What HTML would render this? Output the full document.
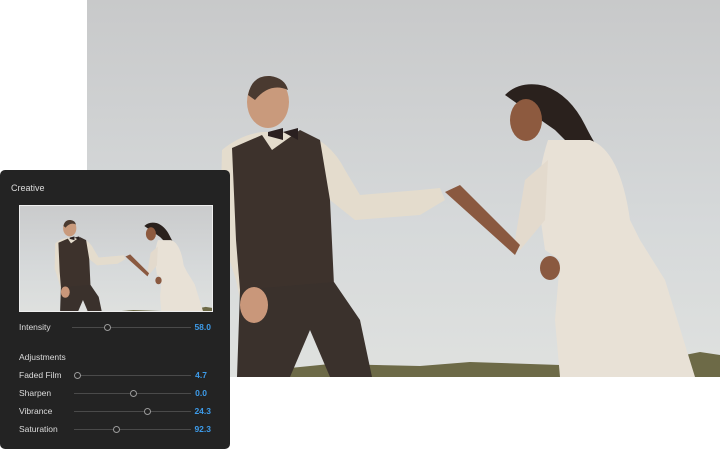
<!DOCTYPE html>
<html><head><meta charset="utf-8"><style>
*{margin:0;padding:0;box-sizing:border-box}
body{width:720px;height:450px;background:#fff;position:relative;overflow:hidden;font-family:"Liberation Sans",sans-serif}
#photo{position:absolute;left:0;top:0}
.panel{position:absolute;left:0;top:170px;width:230px;height:279px;background:#232323;border-radius:5px}
.t{position:absolute;font-size:8.5px;color:#dcdcdc}
.v{position:absolute;right:509px;font-size:8.5px;color:#3d9be9;font-weight:bold}
.tr{position:absolute;height:1px;background:#4a4a4a}
.k{position:absolute;width:7px;height:7px;border:1px solid #9a9a9a;border-radius:50%;background:#232323}
.thumb{position:absolute;left:19px;top:205px;width:194px;height:107px;border:1px solid #eee;overflow:hidden;background:#dcdfe0}
</style></head><body>
<svg id="photo" width="720" height="450" viewBox="0 0 720 450">
<defs>
<linearGradient id="sky" x1="0" y1="0" x2="0" y2="1"><stop offset="0" stop-color="#c8c9ca"/><stop offset="0.6" stop-color="#d6d9da"/><stop offset="1" stop-color="#dfe1df"/></linearGradient>
<g id="scene">
<rect x="87" y="0" width="633" height="377" fill="url(#sky)"/>
<path d="M285 377 L290 368 L330 364 L420 366 L470 362 L560 365 L650 362 L700 352 L720 355 L720 377Z" fill="#6d6a47"/>
<path d="M222 150 Q240 135 262 132 L300 132 Q330 140 345 170 L360 195 L420 190 L440 188 L445 200 L420 215 L355 220 L330 200 L332 290 L240 300 L236 280 L220 230Z" fill="#e4dccd"/>
<path d="M232 148 L262 135 L272 150 L300 130 L320 140 L330 200 L334 285 L300 295 L240 290 L236 240Z" fill="#3d322c"/>
<path d="M240 290 L334 282 L360 320 L372 377 L330 377 L310 330 L290 377 L237 377Z" fill="#3a312c"/>
<ellipse cx="268" cy="102" rx="21" ry="26" fill="#c99a7c"/>
<path d="M248 95 Q252 75 270 76 Q285 78 288 90 Q270 82 255 100Z" fill="#4a3a30"/>
<path d="M268 132 L283 128 L283 140 L268 136Z M298 128 L283 132 L298 140Z" fill="#2a2020"/>
<ellipse cx="254" cy="305" rx="14" ry="18" fill="#c9977a"/>
<path d="M505 95 Q520 80 545 86 Q570 95 585 125 Q595 145 600 150 L575 150 L555 130 Z" fill="#2a211d"/>
<ellipse cx="526" cy="120" rx="16" ry="21" fill="#8d5a3f"/>
<path d="M548 140 L590 140 Q620 150 630 220 L640 240 L665 280 L695 377 L560 377 L555 320 L560 260 L545 250 L540 215 Q535 180 548 140Z" fill="#e8e1d6"/>
<path d="M548 160 L525 180 L515 240 L520 250 L545 220Z" fill="#e3dacd"/>
<path d="M445 192 L460 185 L520 245 L515 255Z" fill="#8a5940"/>
<ellipse cx="550" cy="268" rx="10" ry="12" fill="#8a5940"/>
</g>
</defs>
<use href="#scene"/>
</svg>
<div class="panel"></div>
<div class="t" style="left:11px;top:183px;font-size:9px">Creative</div>
<div class="thumb"><svg width="192" height="105" viewBox="110 30 610 335" preserveAspectRatio="xMidYMax slice"><use href="#scene"/></svg></div>

<div class="t" style="left:19px;top:322px">Intensity</div>
<div class="tr" style="left:72px;top:327px;width:119px"></div><div class="k" style="left:104px;top:324px"></div>
<div class="v" style="top:322px">58.0</div>

<div class="t" style="left:19px;top:352px">Adjustments</div>

<div class="t" style="left:19px;top:370px">Faded Film</div>
<div class="tr" style="left:74px;top:375px;width:117px"></div><div class="k" style="left:74px;top:372px"></div>
<div class="v" style="top:370px;right:513px">4.7</div>

<div class="t" style="left:19px;top:388px">Sharpen</div>
<div class="tr" style="left:74px;top:393px;width:117px"></div><div class="k" style="left:130px;top:390px"></div>
<div class="v" style="top:388px;right:513px">0.0</div>

<div class="t" style="left:19px;top:406px">Vibrance</div>
<div class="tr" style="left:74px;top:411px;width:117px"></div><div class="k" style="left:144px;top:408px"></div>
<div class="v" style="top:406px">24.3</div>

<div class="t" style="left:19px;top:424px">Saturation</div>
<div class="tr" style="left:74px;top:429px;width:117px"></div><div class="k" style="left:113px;top:426px"></div>
<div class="v" style="top:424px">92.3</div>
</body></html>
